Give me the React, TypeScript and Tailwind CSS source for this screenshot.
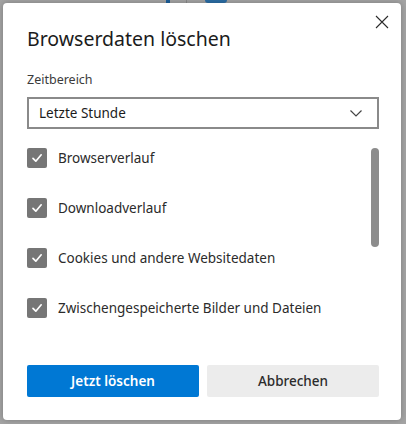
import React from "react";

const items = [
  "Browserverlauf",
  "Downloadverlauf",
  "Cookies und andere Websitedaten",
  "Zwischengespeicherte Bilder und Dateien",
];

function CheckBox() {
  return (
    <span className="flex h-[20px] w-[20px] shrink-0 items-center justify-center rounded-[2px] bg-[#767676]">
      <svg width="14" height="14" viewBox="0 0 14 14" fill="none">
        <path d="M3 7.4 L5.8 10.2 L11.2 3.8" stroke="white" strokeWidth="1.7" strokeLinecap="round" strokeLinejoin="round" />
      </svg>
    </span>
  );
}

export default function App() {
  return (
    <div
      className="relative h-[424px] w-[406px] overflow-hidden bg-[#a4a4a4] p-[3px]"
      style={{ fontFamily: '"Noto Sans", "Open Sans", sans-serif' }}
    >
      {/* faint page content behind the overlay */}
      <div className="absolute left-[166px] top-0 h-[3px] w-[4px] bg-[#1d5f9a]" />
      <div className="absolute left-[186px] top-0 h-[3px] w-[1px] bg-[#8a8a8a]" />
      <div className="absolute left-[205px] top-0 h-[3px] w-[22px] rounded-b-full bg-[#2b6da5]" />

      <div className="relative flex h-[417px] w-[398px] flex-col rounded-[4px] bg-white shadow-[0_0_6px_rgba(0,0,0,0.25)]">
        <button className="absolute right-[9px] top-[9px] flex h-[20px] w-[20px] items-center justify-center">
          <svg width="14" height="14" viewBox="0 0 14 14" fill="none">
            <path d="M1 1 L13 13 M13 1 L1 13" stroke="#2b2b2b" strokeWidth="1.1" />
          </svg>
        </button>

        <div className="pl-[24px] pr-[22px] pt-[22px]">
          <h1 className="text-[19.5px] leading-[28px] font-normal text-[#1b1b1b]">Browserdaten löschen</h1>
          <div className="mt-[18px] text-[12.5px] leading-[18px] text-[#3b3b3b]">Zeitbereich</div>
          <div className="mt-[8px] flex h-[32px] items-center justify-between border-2 border-[#8a8a8a] pl-[10px] pr-[15px]">
            <span className="text-[13.5px] text-[#1b1b1b]">Letzte Stunde</span>
            <svg width="12" height="7" viewBox="0 0 12 7" fill="none">
              <path d="M0.5 0.5 L6 6 L11.5 0.5" stroke="#444" strokeWidth="1.2" />
            </svg>
          </div>
        </div>

        <div className="mt-[4px] flex h-[200px] pl-[24px] pr-[22px]">
          <div className="flex-1 overflow-hidden">
            {items.map((t) => (
              <div key={t} className="flex h-[50px] items-center gap-[11px]">
                <CheckBox />
                <span className="text-[13.5px] text-[#2b2b2b]">{t}</span>
              </div>
            ))}
          </div>
          <div className="mt-[15px] h-[99px] w-[8px] rounded-full bg-[#8c8c8c]" />
        </div>

        <div className="mt-auto mb-[23px] flex gap-[8px] pl-[24px] pr-[22px]">
          <button className="flex h-[32px] flex-1 items-center justify-center rounded-[2px] bg-[#0078d4] text-[13.5px] font-semibold text-white">
            Jetzt löschen
          </button>
          <button className="flex h-[32px] flex-1 items-center justify-center rounded-[2px] bg-[#ececec] text-[13.5px] font-medium text-[#2b2b2b]">
            Abbrechen
          </button>
        </div>
      </div>
    </div>
  );
}
